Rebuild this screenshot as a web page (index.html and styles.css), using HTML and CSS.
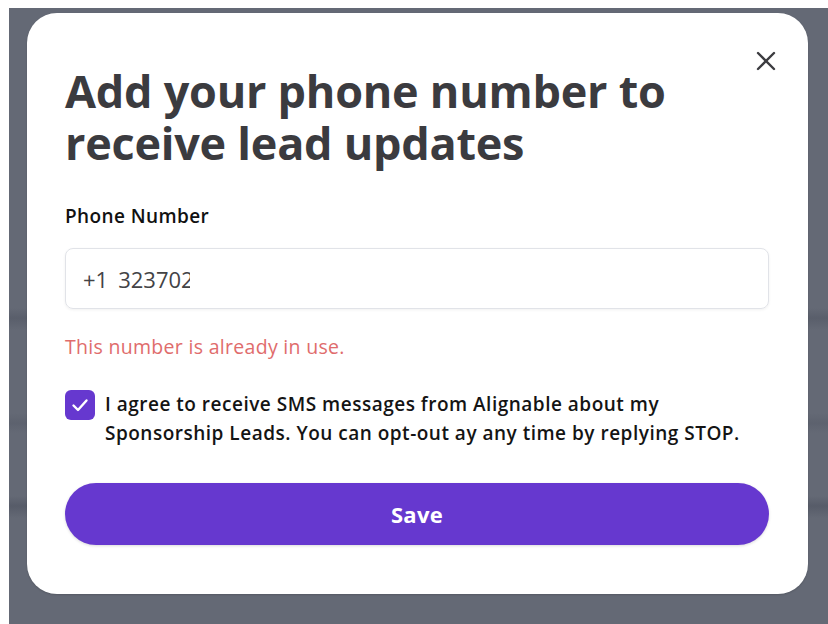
FILE: index.html
```html
<!DOCTYPE html>
<html lang="en">
<head>
<meta charset="utf-8">
<title>Phone number</title>
<link rel="stylesheet" href="styles.css">
</head>
<body>
<div class="screen">
  <div class="backdrop">
    <div class="modal" role="dialog" aria-labelledby="modal-title">
      <button class="close" aria-label="Close">
        <svg viewBox="0 0 24 24" width="24" height="24"><path d="M4 4 L20 20 M20 4 L4 20" stroke="#3c3c40" stroke-width="2.4" stroke-linecap="round" fill="none"/></svg>
      </button>
      <h1 id="modal-title" class="title">Add your phone number to receive lead updates</h1>
      <label class="label" for="phone">Phone Number</label>
      <div class="field" id="phone">
        <span class="field-code">+1</span>
        <span class="field-value">3237023</span>
      </div>
      <p class="error">This number is already in use.</p>
      <div class="consent">
        <span class="checkbox">
          <svg viewBox="0 0 30 30" width="30" height="30"><path d="M8.5 15.5 L13 20 L21.5 10.5" stroke="#fff" stroke-width="2.4" stroke-linecap="round" stroke-linejoin="round" fill="none"/></svg>
        </span>
        <p class="consent-text">I agree to receive SMS messages from Alignable about my Sponsorship Leads. You can opt-out ay any time by replying STOP.</p>
      </div>
      <button class="save">Save</button>
    </div>
  </div>
</div>
</body>
</html>
```
FILE: styles.css
```css
* { box-sizing: border-box; }

html, body {
  margin: 0;
  height: 100%;
  background: #ffffff;
  font-family: "Open Sans", "Noto Sans", sans-serif;
}

.screen {
  height: 100%;
  padding: 8px 0 0 9px;
}

.backdrop {
  height: 100%;
  background-color: #646975;
  background-image:
    linear-gradient(180deg,
      transparent 0, transparent 300px,
      rgba(40,45,60,0.18) 310px, transparent 322px,
      transparent 405px, rgba(40,45,60,0.12) 415px, transparent 425px,
      transparent 488px, rgba(40,45,60,0.22) 498px, transparent 510px);
  padding: 5px 20px 30px 18px;
  display: flex;
}

.modal {
  position: relative;
  flex: 1;
  background: #ffffff;
  border-radius: 30px;
  padding: 52px 39px 0 38px;
  display: flex;
  flex-direction: column;
  box-shadow: 0 1px 2px rgba(0,0,0,0.15);
}

.close {
  position: absolute;
  top: 36px;
  right: 30px;
  width: 24px;
  height: 24px;
  padding: 0;
  border: 0;
  background: none;
  display: flex;
}

.title {
  margin: 0;
  max-width: 660px;
  font-size: 45px;
  line-height: 52px;
  font-weight: 700;
  color: #3b3b3f;
  letter-spacing: -0.25px;
}

.label {
  margin-top: 36px;
  font-size: 19px;
  font-weight: 600;
  color: #111111;
  line-height: 22px;
  letter-spacing: 0.4px;
}

.field {
  margin-top: 21px;
  height: 61px;
  border: 1px solid #e1e3e8;
  border-radius: 8px;
  box-shadow: 0 1px 3px rgba(0,0,0,0.06);
  display: flex;
  align-items: center;
  padding-left: 17px;
  font-size: 22px;
  color: #434346;
}

.field-code {
  margin-right: 10px;
}

.field-value {
  width: 72px;
  overflow: hidden;
  white-space: nowrap;
}

.error {
  margin: 27px 0 0;
  font-size: 19.5px;
  line-height: 22px;
  color: #e06c6c;
  letter-spacing: 0.3px;
}

.consent {
  margin-top: 32px;
  display: flex;
  gap: 10px;
  align-items: flex-start;
}

.checkbox {
  flex: none;
  width: 30px;
  height: 30px;
  border-radius: 6px;
  background: #6638cf;
  display: flex;
}

.consent-text {
  margin: 0;
  font-size: 19px;
  font-weight: 600;
  line-height: 29px;
  color: #141414;
  letter-spacing: 0.5px;
  max-width: 655px;
}

.save {
  margin-top: 35px;
  height: 62px;
  border: 0;
  border-radius: 31px;
  background: #6638cf;
  color: #ffffff;
  font-family: inherit;
  font-size: 22px;
  font-weight: 700;
  letter-spacing: 0.3px;
  box-shadow: 0 1px 3px rgba(0,0,0,0.15);
}
```
